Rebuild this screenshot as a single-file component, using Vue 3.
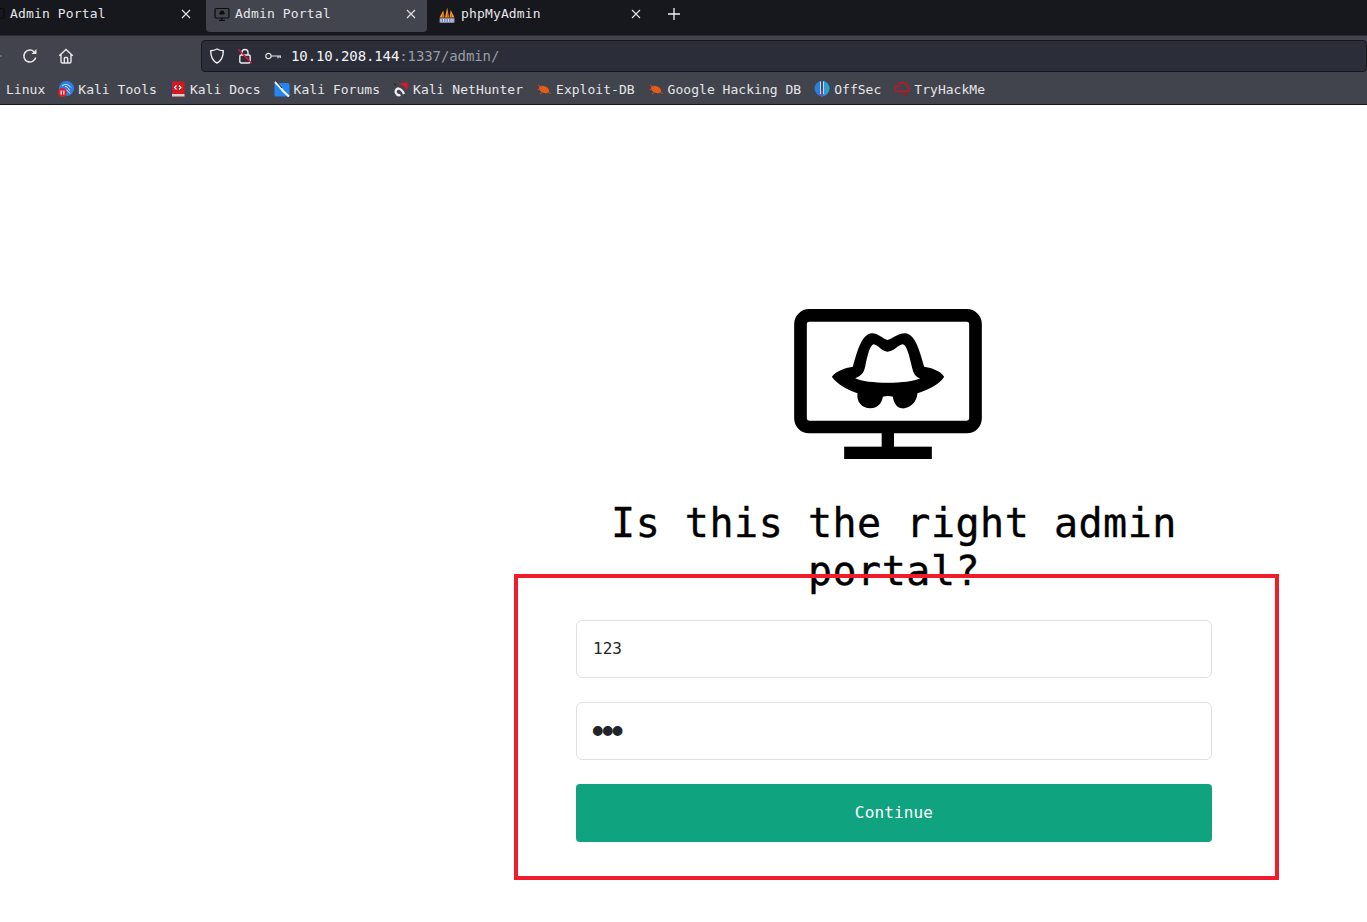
<template>
  <div class="page">
    <header class="chrome">
      <!-- tab strip -->
      <div class="tabs">
        <div
          v-for="tab in tabs"
          :key="tab.id"
          class="tab"
          :class="{ active: tab.active }"
        >
          <svg v-if="tab.icon === 'monitor'" class="tab-icon" viewBox="0 0 16 16">
            <rect x="1" y="2.500" width="14" height="9.500" rx="1.200" fill="none" stroke="#0d0d0f" stroke-width="1.200" />
            <path d="M4.500 7.500c1-.3 1.300-.5 1.500-1.200C6.200 5.200 6.500 4.500 7 4.500c.4 0 .6.300 1 .3s.6-.3 1-.3c.5 0 .8.700 1 1.800.2.700.5.900 1.500 1.200-.8.500-1.400.8-2 1-.5.500-1.200.4-1.500-.2-.3.600-1 .7-1.500.2-.6-.2-1.200-.5-2-1z" fill="#0d0d0f" />
            <path d="M8 12v2M5 14.300h6" stroke="#0d0d0f" stroke-width="1.200" />
          </svg>
          <svg v-else class="tab-icon sail" viewBox="0 0 16 16">
            <path d="M0.500 10.500 4.200 3.500l1.300 7zM6 10.500 8.200 0.500l1.800 10zM10.500 10.500 11.700 3l3.800 7.500z" fill="#f29a22" />
            <path d="M3 10.500 4.200 5l.6 5.500zM7.800 10.500 8.200 4l1 6.500zM11.700 10.500l.3-5 1 5z" fill="#c9541a" />
            <rect x="0.500" y="11" width="15" height="5" rx="0.800" fill="#7e8aa8" />
            <path d="M2 12v3M4.500 12v3M7 12v3M9.500 12v3M12 12v3M14 12v3" stroke="#d5daea" stroke-width="1" />
          </svg>
          <span class="tab-title">{{ tab.title }}</span>
          <svg class="tab-close" viewBox="0 0 10 10">
            <path d="M1 1l8 8M9 1l-8 8" stroke="#e4e4e6" stroke-width="1.100" fill="none" />
          </svg>
        </div>
        <svg class="new-tab" viewBox="0 0 12 12">
          <path d="M6 0v12M0 6h12" stroke="#f2f2f3" stroke-width="1.300" />
        </svg>
      </div>

      <!-- toolbar -->
      <div class="toolbar">
        <svg class="nav-back" viewBox="0 0 6 4">
          <path d="M0 2h3" stroke="#d8d9dc" stroke-width="1.300" />
        </svg>
        <svg class="nav-icon reload" viewBox="0 0 16 16">
          <path d="M13.700 9.500A6 6 0 1 1 12 3.700" fill="none" stroke="#e8e8ea" stroke-width="1.500" />
          <path d="M14.500 1v5h-5z" fill="#e8e8ea" />
        </svg>
        <svg class="nav-icon home" viewBox="0 0 16 16">
          <path d="M1.200 7.800 8 1.500l6.800 6.300M3 6.500v7a1.500 1.500 0 0 0 1.500 1.500h7a1.500 1.500 0 0 0 1.500-1.500v-7M6.300 15v-4.500a1 1 0 0 1 1-1h1.400a1 1 0 0 1 1 1V15" fill="none" stroke="#e8e8ea" stroke-width="1.400" />
        </svg>
        <div class="urlbar">
          <svg class="shield" viewBox="0 0 16 16">
            <path d="M8 1c2 1.200 4 1.700 6.300 1.800 0 6-1.800 10-6.300 12.200C3.500 12.800 1.700 8.800 1.700 2.800 4 2.700 6 2.200 8 1z" fill="none" stroke="#eceded" stroke-width="1.400" />
          </svg>
          <svg class="lock" viewBox="0 0 16 16">
            <path d="M5 7V4.500a3 3 0 0 1 6 0V7" fill="none" stroke="#eceded" stroke-width="1.400" />
            <rect x="2.800" y="7" width="10.400" height="8" rx="1.500" fill="none" stroke="#eceded" stroke-width="1.400" />
            <path d="M1.500 1.500 14.500 15" stroke="#e4173e" stroke-width="1.500" />
          </svg>
          <svg class="key" viewBox="0 0 16 8">
            <circle cx="3.500" cy="4" r="2.700" fill="none" stroke="#e8e8ea" stroke-width="1.200" />
            <path d="M6.200 4H16M13 4v2.200M15.200 4v2" fill="none" stroke="#e8e8ea" stroke-width="1.200" />
          </svg>
          <span class="url">10.10.208.144<span class="url-dim">:1337/admin/</span></span>
        </div>
      </div>

      <!-- bookmarks -->
      <nav class="bookmarks">
        <span class="bookmark">Linux</span>
        <span v-for="b in bookmarks" :key="b.label" class="bookmark">
          <svg class="bm-icon" viewBox="0 0 16 16">
            <template v-if="b.icon === 'tools'">
              <circle cx="8.500" cy="7.500" r="7.500" fill="#2c80e4" />
              <path d="M4 5c3-2.500 6-2 9 1.500M7 5.500c2 0 3.500 1.500 4.500 4M6 8.500c2 0 4 1 6 4" stroke="#d7e6fa" stroke-width="1" fill="none" />
              <circle cx="4.500" cy="11.500" r="4.500" fill="#dc1f2b" />
              <path d="M3.200 9.500v4M5.800 9.500v4" stroke="#fff" stroke-width="1.200" />
            </template>
            <template v-else-if="b.icon === 'docs'">
              <rect x="0.500" y="0.500" width="14" height="15" rx="1" fill="#cf1a1f" />
              <rect x="2" y="13" width="12.500" height="2.500" fill="#d9cfc4" />
              <rect x="0.500" y="0.500" width="1.500" height="15" fill="#22437e" />
              <path d="M6.500 4.500 4.500 6.500l2 2M9 4.500l2 2-2 2" stroke="#fff" stroke-width="1.100" fill="none" />
            </template>
            <template v-else-if="b.icon === 'forums'">
              <rect x="0.500" y="2" width="15" height="13.500" rx="1.500" fill="#2486ee" />
              <path d="M1 1l5 5 3 4 6 5.500" stroke="#f1f3f6" stroke-width="2.200" fill="none" />
              <path d="M2.500 .5 8 7" stroke="#20252c" stroke-width="1" />
            </template>
            <template v-else-if="b.icon === 'hunter'">
              <path d="M5 3 14 1c1.500 3 1 6-.5 8C12 5.500 9 3.500 5 3z" fill="#cf1b2b" />
              <path d="M11 13C9.500 9.500 7.500 8 5.500 7.500 3.500 7.500 2 9.500 3 12c.8 1.800 2.800 2.500 4.500 2" fill="none" stroke="#eee" stroke-width="2.300" />
              <path d="M1 2.500l2 2" stroke="#26272c" stroke-width="1.500" />
            </template>
            <template v-else-if="b.icon === 'exploit'">
              <ellipse cx="8" cy="8.500" rx="5.500" ry="3.300" fill="#e85a18" transform="rotate(25 8 8.500)" />
              <path d="M2 4l4 2.500M15 12.500l-3-1M4 13l3-2M1.500 8.500h3" stroke="#b9521f" stroke-width="1" />
            </template>
            <template v-else-if="b.icon === 'offsec'">
              <circle cx="8" cy="7.500" r="7.500" fill="#2d7ed8" />
              <path d="M8 0a7.500 7.500 0 0 1 0 15z" fill="#2a9fd0" />
              <path d="M6.500 .5v12.500M9.500 .5v12.500" stroke="#c8d8ea" stroke-width="1" />
              <path d="M8 0v16" stroke="#3b3f6e" stroke-width="1.600" />
              <path d="M8 10v6" stroke="#7d3ed8" stroke-width="2" />
            </template>
            <template v-else>
              <path d="M3.500 10.500h9a2.500 2.500 0 0 0 .7-4.900C13 3.200 11 1.500 8.500 1.500 6.500 1.500 5 2.800 4.500 5 2.300 5 1 6.300 1 7.800s1 2.700 2.500 2.700z" fill="none" stroke="#c8141f" stroke-width="1.300" />
              <path d="M7 12.500h7M9 14.500h5" stroke="#8a2229" stroke-width="1" />
            </template>
          </svg>
          {{ b.label }}
        </span>
      </nav>
    </header>

    <main class="content">
      <svg class="logo" viewBox="42 42 563 450">
        <rect x="61" y="61" width="525" height="335" rx="26" fill="none" stroke="#000" stroke-width="38" />
        <path d="M323 410v50" stroke="#000" stroke-width="37" />
        <rect x="192" y="455" width="263" height="37" fill="#000" />
        <path d="M155 245C170 225 200 218 218 215 232 165 245 118 275 115 295 115 305 130 322 135 340 130 352 115 375 115 405 118 418 165 432 215 450 218 480 225 492 245 480 268 440 285 412 295 410 325 385 342 365 340 345 338 340 315 338 305 328 302 318 302 308 305 306 320 295 340 270 340 245 340 228 320 232 295 205 285 170 268 155 245Z" fill="#000" />
        <path d="M225 250C245 240 250 235 255 215 262 180 270 150 280 148 295 150 305 170 322 170 342 170 352 150 368 148 380 150 388 185 395 215 400 235 405 245 420 250 385 268 260 268 225 250Z" fill="#fff" />
      </svg>

      <h1 class="title">Is this the right admin portal?</h1>

      <form class="login" @submit.prevent>
        <input class="field" type="text" value="123" />
        <input class="field secret" type="password" value="123" />
        <button class="submit" type="submit">Continue</button>
      </form>
    </main>
  </div>
</template>

<script setup>
const tabs = [
  { id: 1, title: "Admin Portal", icon: "monitor", active: false },
  { id: 2, title: "Admin Portal", icon: "monitor", active: true },
  { id: 3, title: "phpMyAdmin", icon: "sail", active: false }
];

const bookmarks = [
  { label: "Kali Tools", icon: "tools" },
  { label: "Kali Docs", icon: "docs" },
  { label: "Kali Forums", icon: "forums" },
  { label: "Kali NetHunter", icon: "hunter" },
  { label: "Exploit-DB", icon: "exploit" },
  { label: "Google Hacking DB", icon: "exploit" },
  { label: "OffSec", icon: "offsec" },
  { label: "TryHackMe", icon: "thm" }
];
</script>

<style>
html,
body {
  margin: 0;
  background: #fff;
}
</style>

<style scoped>
.page {
  height: 922px;
  overflow: hidden;
  font-family: "DejaVu Sans Mono", "Liberation Mono", monospace;
}

/* browser chrome */
.chrome {
  display: flex;
  flex-direction: column;
}

.tabs {
  height: 36px;
  display: flex;
  align-items: flex-start;
  gap: 4px;
  margin-left: -19px;
  background: #17181d;
  box-sizing: border-box;
  border-bottom: 1px solid #2b2c32;
}

.tab {
  width: 221px;
  height: 32px;
  flex-shrink: 0;
  display: flex;
  align-items: center;
  box-sizing: border-box;
  padding: 0 11px 5px 8px;
  border-radius: 0 0 4px 4px;
  color: #e6e6e8;
  font-size: 13px;
  letter-spacing: 0.15px;
}

.tab.active {
  background: #42454e;
}

.tab-icon {
  width: 16px;
  height: 16px;
  margin-right: 5px;
  flex-shrink: 0;
}

.tab-icon.sail {
  margin: 2px 6px 0 0;
}

.tab-title {
  flex: 1;
}

.tab-close {
  width: 10px;
  height: 10px;
  margin-top: 1px;
}

.new-tab {
  width: 12px;
  height: 12px;
  margin: 8px 0 0 12px;
  flex-shrink: 0;
}

.toolbar {
  height: 36px;
  display: flex;
  align-items: flex-start;
  background: #42444d;
  box-sizing: border-box;
  padding-top: 4px;
}

.nav-back {
  width: 3px;
  height: 4px;
  margin-top: 14px;
  flex-shrink: 0;
}

.nav-icon {
  width: 16px;
  height: 16px;
  flex-shrink: 0;
  margin-top: 8px;
}

.reload {
  margin-left: 19px;
}

.home {
  margin-left: 20px;
}

.urlbar {
  flex: 1;
  height: 32px;
  margin-left: 127px;
  display: flex;
  align-items: center;
  box-sizing: border-box;
  padding-left: 7px;
  background: #2b2e39;
  border: 1px solid #17181d;
  border-radius: 4px;
  color: #f4f4f5;
  font-size: 14px;
}

.shield {
  width: 16px;
  height: 16px;
}

.lock {
  width: 16px;
  height: 16px;
  margin-left: 12px;
}

.key {
  width: 16px;
  height: 8px;
  margin-left: 12px;
}

.url {
  margin-left: 10px;
  letter-spacing: -0.1px;
}

.url-dim {
  color: #9a9ca5;
}

.bookmarks {
  height: 33px;
  display: flex;
  align-items: center;
  gap: 13px;
  box-sizing: border-box;
  padding: 2px 0 0 6px;
  background: #42444d;
  border-bottom: 1px solid #17181d;
  color: #e6e6e8;
  font-size: 13px;
  letter-spacing: 0.03px;
  white-space: nowrap;
}

.bookmark {
  display: flex;
  align-items: center;
  gap: 4px;
}

.bm-icon {
  width: 16px;
  height: 16px;
}

/* page */
.content {
  width: 765px;
  margin-left: 514px;
  display: flex;
  flex-direction: column;
  align-items: center;
  padding-top: 204px;
}

.logo {
  width: 188px;
  height: 150px;
  margin-right: 17px;
  flex-shrink: 0;
  filter: blur(0.4px);
}

/* second line runs under the form's border, as in the page */
.title {
  width: 600px;
  height: 75px;
  margin: 40px 5px 0 0;
  font-size: 40px;
  font-weight: 400;
  line-height: 48px;
  letter-spacing: 0.52px;
  text-align: center;
  color: #000;
  -webkit-text-stroke: 0.4px #000;
}

.login {
  position: relative;
  width: 765px;
  height: 306px;
  display: flex;
  flex-direction: column;
  gap: 24px;
  box-sizing: border-box;
  padding: 42px 63px 34px 58px;
  border: 4px solid #f01c2c;
}

.field {
  height: 58px;
  width: 100%;
  box-sizing: border-box;
  padding: 0 16px 2px;
  background: #fff;
  border: 1px solid #dee2e6;
  border-radius: 6px;
  color: #212529;
  font-family: inherit;
  font-size: 16px;
  outline: none;
}

/* big bullets drawn close together */
.field.secret {
  padding: 5px 0 0 10px;
  font-family: "Liberation Mono", monospace;
  font-size: 36px;
  letter-spacing: -11.700px;
}

.submit {
  height: 58px;
  width: 100%;
  border: 0;
  border-radius: 4px;
  padding: 0 0 2px;
  background: #10a37f;
  color: #fff;
  font-family: inherit;
  font-size: 16px;
  letter-spacing: 0.15px;
}
</style>
